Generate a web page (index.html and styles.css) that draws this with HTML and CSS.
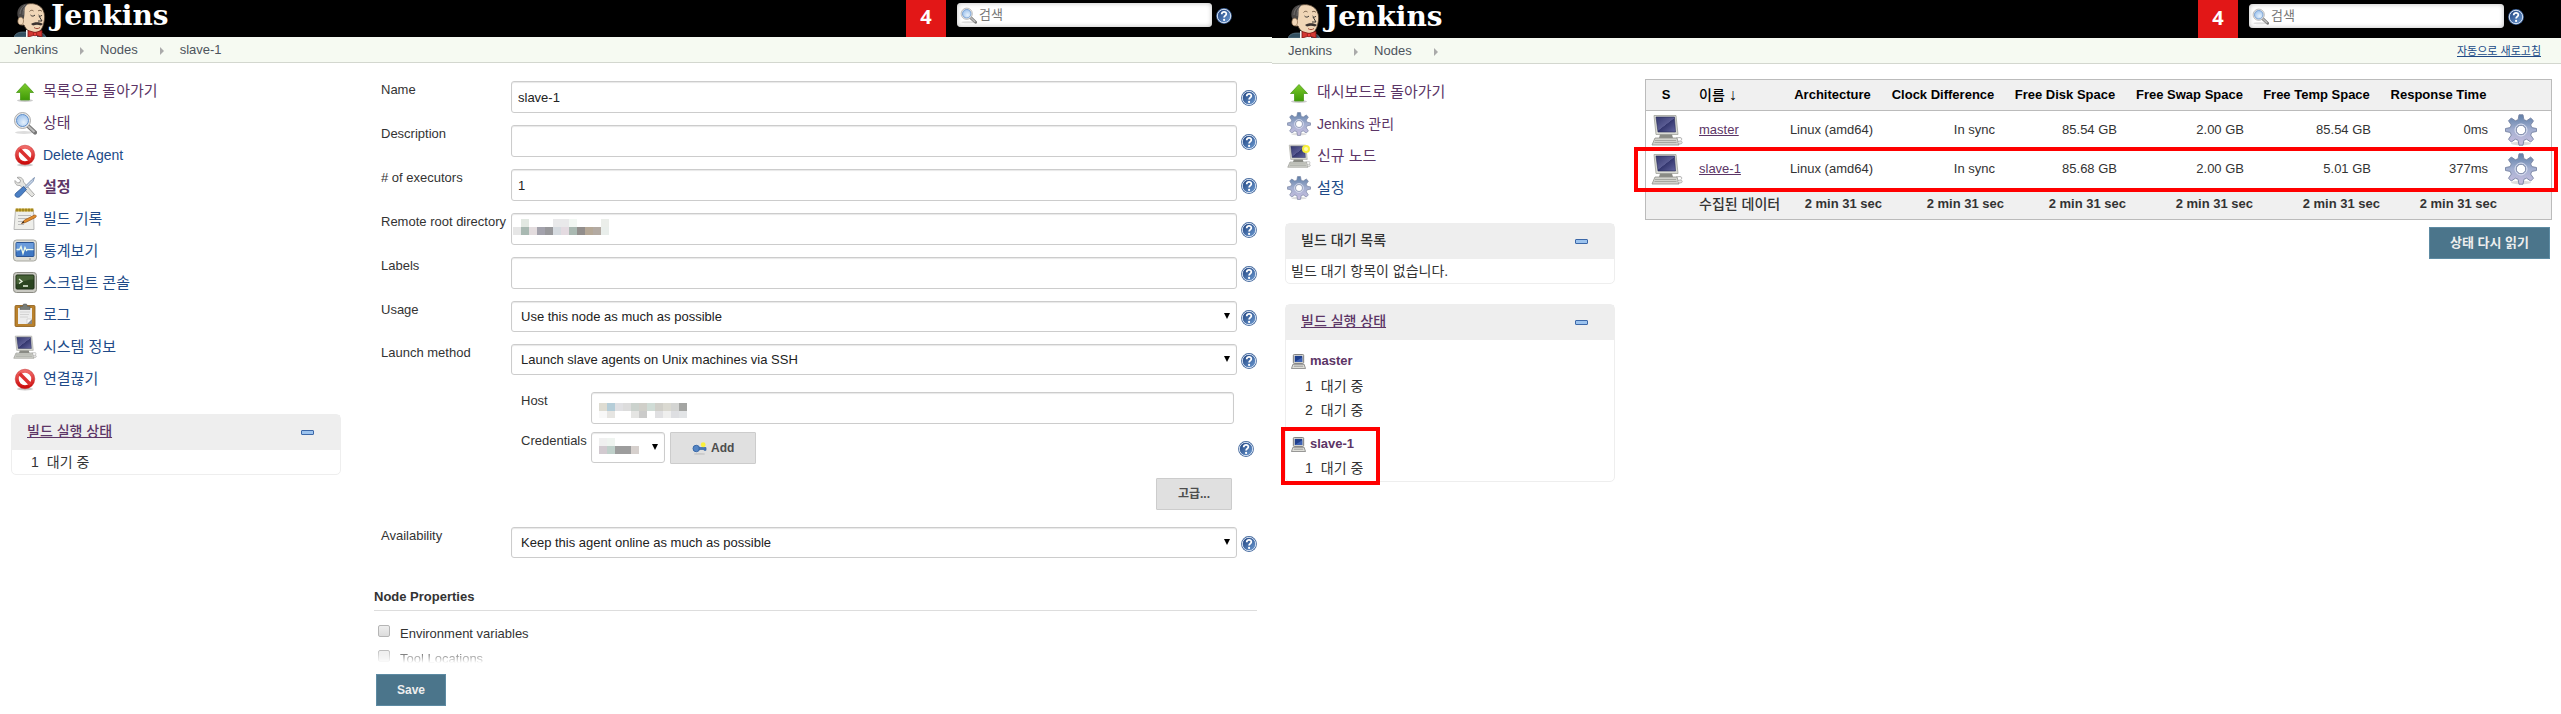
FILE: index.html
```html
<!DOCTYPE html>
<html lang="ko">
<head>
<meta charset="utf-8">
<title>Jenkins</title>
<link rel="stylesheet" href="styles.css">
</head>
<body>
<svg class="defs" aria-hidden="true">
  <defs>
    <linearGradient id="gGreen" x1="0" y1="0" x2="0" y2="1"><stop offset="0" stop-color="#7ccb2c"/><stop offset="1" stop-color="#3f9a06"/></linearGradient>
    <linearGradient id="gRed" x1="0" y1="0" x2="0" y2="1"><stop offset="0" stop-color="#f06a68"/><stop offset="1" stop-color="#cc0d0d"/></linearGradient>
    <linearGradient id="gGear" x1="0" y1="0" x2="0" y2="1"><stop offset="0" stop-color="#5f7fa8"/><stop offset=".5" stop-color="#a3afd0"/><stop offset="1" stop-color="#c9bfe0"/></linearGradient>
    <linearGradient id="gScreen" x1="0" y1="0" x2="1" y2="1"><stop offset="0" stop-color="#34386f"/><stop offset=".5" stop-color="#5a5c93"/><stop offset=".52" stop-color="#34376f"/><stop offset="1" stop-color="#63659e"/></linearGradient>
    <linearGradient id="gHelp" x1="0" y1="0" x2="1" y2="1"><stop offset="0" stop-color="#1c3f7c"/><stop offset="1" stop-color="#6f9dd4"/></linearGradient>
    <radialGradient id="gLens" cx=".6" cy=".65" r=".6"><stop offset="0" stop-color="#e6f1fc"/><stop offset="1" stop-color="#a3c6ee"/></radialGradient>
  </defs>
  <symbol id="i-up" viewBox="0 0 24 24">
    <ellipse cx="12" cy="21.500" rx="8" ry="1.500" fill="#ccc"/>
    <path d="M12 4.500l8.500 9h-4v7.500h-9v-7.500h-4z" fill="url(#gGreen)" stroke="#4c9a1c" stroke-width=".8" stroke-linejoin="round"/>
  </symbol>
  <symbol id="i-search" viewBox="0 0 24 24">
    <ellipse cx="11" cy="21.500" rx="9" ry="1.500" fill="#ddd"/>
    <path d="M15 15l7 6.500" stroke="#777" stroke-width="4.200" stroke-linecap="round"/>
    <path d="M15 15l6.500 6" stroke="#bbb" stroke-width="2"/>
    <circle cx="9.500" cy="9.500" r="8" fill="#e8e8e8" stroke="#999" stroke-width=".8"/>
    <circle cx="9.500" cy="9.500" r="6" fill="url(#gLens)" stroke="#5f8fca" stroke-width="1"/>
  </symbol>
  <symbol id="i-stop" viewBox="0 0 24 24">
    <ellipse cx="12" cy="22" rx="8" ry="1.500" fill="#ccc"/>
    <circle cx="12" cy="12" r="8" fill="#fff" stroke="url(#gRed)" stroke-width="3.500"/>
    <path d="M6.500 6.500l11 11" stroke="#dc3030" stroke-width="3.500"/>
    <circle cx="12" cy="12" r="9.800" fill="none" stroke="#c32222" stroke-width=".5"/>
  </symbol>
  <symbol id="i-tools" viewBox="0 0 24 24">
    <path d="M4 2.500c3-1 6.500.5 6.500 4.500l11 12.500-2.500 2.500-12-11.500c-3.500.5-5.500-2-5-5l2.500 2.500 2.500-.5.500-2.500z" fill="#e4e4e0" stroke="#999" stroke-width=".8"/>
    <path d="M21.500 2.500l-1.500 4-6.500 6.500-1.500-1.500 6.500-6.500 3-2.500z" fill="#c6d4e6" stroke="#6f87a8" stroke-width=".8"/>
    <path d="M10.500 11.500l3 3-6.500 7c-2 2-6.500 0-4.500-3z" fill="#4a7fc4" stroke="#2c5592" stroke-width=".8"/>
  </symbol>
  <symbol id="i-note" viewBox="0 0 24 24">
    <path d="M2.500 3h18l.5 19.500h-20z" fill="#eeeeea" stroke="#aaa" stroke-width=".8"/>
    <path d="M2.500 1.500h18v3h-18z" fill="#c8a72c"/>
    <path d="M4 1.500v3M7 1.500v3M10 1.500v3M13 1.500v3M16 1.500v3M19 1.500v3" stroke="#7d671a"/>
    <path d="M5 8.500h13M5 11.500h9M5 14.500h5M5 17.500h6" stroke="#bbb"/>
    <path d="M8.500 16.500l3-3.500 10-5c1.500-.5 2.500 1.500 1 2.500l-10 5z" fill="#e08a2a" stroke="#98561a" stroke-width=".7"/>
    <path d="M8.500 16.500l2-2.500.8 1.500z" fill="#222"/>
  </symbol>
  <symbol id="i-monitor" viewBox="0 0 24 24">
    <rect x=".5" y="1" width="23" height="21" rx="3" fill="#deded8" stroke="#a8a8a0"/>
    <rect x="3" y="3.500" width="18" height="14" rx="1" fill="#3f78c4" stroke="#2c5592"/>
    <path d="M3.500 4h17v5c-6 0-12 1-17 4z" fill="#6a9bdb"/>
    <path d="M3.500 10.500h3l1.500-3 2 7 2-6 1.500 3 1-1h6" fill="none" stroke="#eefaea" stroke-width="1.300"/>
    <circle cx="17" cy="20" r=".8" fill="#888"/>
  </symbol>
  <symbol id="i-terminal" viewBox="0 0 24 24">
    <rect x=".5" y="1.500" width="23" height="20" rx="3" fill="#c9c9c2" stroke="#8c8c84"/>
    <rect x="3" y="4" width="18" height="14" rx="1" fill="#2a4420" stroke="#1c2c16"/>
    <path d="M3.500 4.500h17v4c-6 0-12 2-17 5z" fill="#466136"/>
    <path d="M6 8l3 2.500-3 2M10 15h5" fill="none" stroke="#e8f2e0" stroke-width="1.300"/>
  </symbol>
  <symbol id="i-clip" viewBox="0 0 24 24">
    <rect x="2" y="2.500" width="20" height="21" rx="1" fill="#b9812c" stroke="#8a5c18" stroke-width=".8"/>
    <path d="M5 5h14v16h-14z" fill="#ededed"/>
    <path d="M14 21l5-5v5z" fill="#888"/><path d="M14 21v-5h5z" fill="#fafafa" stroke="#bbb" stroke-width=".5"/>
    <path d="M7 9h10M7 11.500h9M7 14h8" stroke="#ccc" stroke-width=".8"/>
    <path d="M7 6.500v-3h2.500l1-2.500h3l1 2.500h2.500v3z" fill="#777d78" stroke="#555" stroke-width=".5"/>
  </symbol>
  <symbol id="i-pc" viewBox="0 0 32 32">
    <path d="M3 1.500h22l2 19h-22z" fill="#d9dad4" stroke="#a2a39c" stroke-width=".8"/>
    <path d="M5 3h18.500l1 15h-17.500z" fill="url(#gScreen)" stroke="#262a56" stroke-width=".6"/>
    <path d="M9 20.500h12l1 3.500h-14z" fill="#8a8b85"/>
    <path d="M4 24h22l2 7h-27z" fill="#d2d3cd" stroke="#8f908a" stroke-width=".8"/>
    <path d="M4 26.500h21M3.500 28.500h22" stroke="#9b9c96" stroke-width=".8"/>
    <path d="M25 24c5-1 7 0 5 2.500" fill="none" stroke="#aaa"/><ellipse cx="29" cy="28.500" rx="2.200" ry="1.500" fill="#e5e5e2" stroke="#999" stroke-width=".6"/>
  </symbol>
  <symbol id="i-pcnew" viewBox="0 0 24 24">
    <use href="#i-pc" width="24" height="24"/>
    <circle cx="19" cy="5" r="4" fill="#f7ee3a"/><circle cx="19" cy="5" r="2" fill="#fdfbb0"/>
  </symbol>
  <symbol id="i-pcs" viewBox="0 0 16 16">
    <rect x="2.500" y=".5" width="11" height="9.500" rx="1" fill="#deded8" stroke="#777"/>
    <rect x="4" y="2" width="8" height="6.500" fill="#1f3f8c"/><path d="M4 8.500l8-5v5z" fill="#3e62b4"/>
    <path d="M2 11h12l1.500 4.500h-15z" fill="#deded8" stroke="#777" stroke-width=".8"/><path d="M3 13h10" stroke="#999"/>
  </symbol>
  <symbol id="i-gear" viewBox="0 0 32 32">
    <ellipse cx="16" cy="29.500" rx="10" ry="1.800" fill="#ddd"/>
    <path fill-rule="evenodd" d="M14 .8h4l.9 4.900 2.700 1.100 4.100-2.800 2.800 2.800-2.800 4.100 1.100 2.700 4.700.9v3l-4.700.9-1.100 2.700 2.800 4.100-2.800 2.800-4.100-2.800-2.700 1.100-.9 4.900h-4l-.9-4.900-2.700-1.100-4.100 2.800-2.800-2.800 2.800-4.100-1.100-2.700-4.700-.9v-3l4.700-.9 1.100-2.700-2.800-4.100 2.800-2.800 4.100 2.800 2.700-1.100zM16 11.300a4.700 4.700 0 1 0 0 9.400 4.700 4.700 0 1 0 0-9.400z" fill="url(#gGear)" stroke="#7783a3" stroke-width=".9" stroke-linejoin="round"/>
    <circle cx="16" cy="16" r="6" fill="none" stroke="#dde2f2" stroke-width="1"/>
  </symbol>
  <symbol id="i-help" viewBox="0 0 16 16">
    <circle cx="8" cy="8" r="7.900" fill="#3c6299"/>
    <circle cx="8" cy="8" r="6.700" fill="url(#gHelp)" stroke="#e8effa" stroke-width=".9"/>
    <path d="M5.700 6.200c0-3.200 4.800-3 4.600-.2-.1 1.600-2.200 1.700-2.200 3.500" fill="none" stroke="#fff" stroke-width="1.800"/>
    <circle cx="8.100" cy="11.900" r="1.100" fill="#fff"/>
  </symbol>
  <symbol id="i-minus" viewBox="0 0 13 5"><rect x=".5" y=".5" width="12" height="4" rx=".5" fill="#9cc3ee" stroke="#3c68a8"/></symbol>
  <symbol id="i-key" viewBox="0 0 16 14">
    <ellipse cx="8" cy="12.800" rx="6" ry="1" fill="#c8c8c8"/>
    <circle cx="4.500" cy="7" r="3.500" fill="#5585c4" stroke="#3465a4"/>
    <path d="M7.500 6h7.500v3h-2v-1h-5.500z" fill="#4a7ab8" stroke="#3465a4" stroke-width=".8"/>
    <circle cx="12" cy="3" r="2.600" fill="#f9f03a"/>
  </symbol>
  <symbol id="i-butler" viewBox="0 0 34 35">
    <path d="M0 35c1-3 4-5 9-5h16c4 1 6 3 7 5z" fill="#335061" stroke="#6d8796" stroke-width=".6"/>
    <path d="M12 28h11v7h-11z" fill="#f4f4f4"/>
    <path d="M6 8c3-8 18-9 23 0 2 4 2 8 1 12-1 6-4 11-9 11-5 0-9-3-11-8-5 1-7-4-4-8z" fill="#f0d6b7" stroke="#4b3a2a" stroke-width=".8"/>
    <path d="M14 1.500c-7 0-11.500 5-10.500 12l1 3c2-2 4-1 5 1 1-3 1-6 1-9 0-3 1-5 3.500-7z" fill="#4a4746"/>
    <path d="M11 3c-3 2-5 5-5 9M13 3c-3 2-4 5-4 10" fill="none" stroke="#8d8a88" stroke-width=".6"/>
    <path d="M4.500 16.500c2-2.500 5-1 5 2.500 0 3-2 4.500-4 3.500-2-1-2-4-1-6z" fill="#f0d6b7" stroke="#8a6b4c" stroke-width=".7"/>
    <path d="M15.500 9.500c1-1.500 3-1.500 4-.5M24 9c1-1 3-1 4 .5" fill="none" stroke="#5c4530" stroke-width=".8"/>
    <path d="M16.500 13c1.500 1.500 3 1.500 4.500 0M24.500 13c1.500 1.500 2.500 1.500 3.500 0M25 14l3 5h-4" fill="none" stroke="#222" stroke-width=".9"/>
    <path d="M17 22c3-2.500 9-2.500 12 0l-2 1.500c-3-1-5-1-8 0z" fill="#3a3230"/>
    <path d="M20 25.500c2 1.500 4 1.500 6 0" fill="none" stroke="#a04a3a"/>
    <path d="M14 28.500l7 2 7-2v6.500l-7-2-7 2z" fill="#d33833" stroke="#7d1512" stroke-width=".8"/>
    <circle cx="21" cy="32" r="1.800" fill="#ef3d3a" stroke="#7d1512" stroke-width=".6"/>
  </symbol>
  <symbol id="i-tri" viewBox="0 0 4 8"><path d="M0 0l4 4-4 4z" fill="#aaa"/></symbol>
</svg>

<div class="screens">
  <section class="screen screen-config">
    <header class="top">
      <a class="brand" href="#"><svg class="butler"><use href="#i-butler"/></svg><span>Jenkins</span></a>
      <a class="alerts" href="#">4</a>
      <label class="search"><svg><use href="#i-search"/></svg><input type="text" placeholder="검색" aria-label="검색"></label>
      <a class="help" href="#" aria-label="Help"><svg><use href="#i-help"/></svg></a>
    </header>
    <nav class="crumbs">
      <a href="#">Jenkins</a><svg><use href="#i-tri"/></svg><a href="#">Nodes</a><svg><use href="#i-tri"/></svg><a href="#">slave-1</a>
    </nav>
    <div class="body">
      <aside class="side">
        <ul class="tasks">
          <li><a class="seen" href="#"><svg><use href="#i-up"/></svg>목록으로 돌아가기</a></li>
          <li><a class="seen" href="#"><svg><use href="#i-search"/></svg>상태</a></li>
          <li><a lang="en" href="#"><svg><use href="#i-stop"/></svg>Delete Agent</a></li>
          <li><a class="seen current" href="#"><svg><use href="#i-tools"/></svg>설정</a></li>
          <li><a href="#"><svg><use href="#i-note"/></svg>빌드 기록</a></li>
          <li><a href="#"><svg><use href="#i-monitor"/></svg>통계보기</a></li>
          <li><a href="#"><svg><use href="#i-terminal"/></svg>스크립트 콘솔</a></li>
          <li><a href="#"><svg><use href="#i-clip"/></svg>로그</a></li>
          <li><a href="#"><svg><use href="#i-pc"/></svg>시스템 정보</a></li>
          <li><a href="#"><svg><use href="#i-stop"/></svg>연결끊기</a></li>
        </ul>
        <section class="pane">
          <h2><a href="#">빌드 실행 상태</a><button type="button" aria-label="접기"><svg><use href="#i-minus"/></svg></button></h2>
          <ol class="executors">
            <li><span>1</span>대기 중</li>
          </ol>
        </section>
      </aside>

      <form class="config">
        <div class="row"><label for="name">Name</label><input id="name" type="text" value="slave-1"><a class="help" href="#" aria-label="Help"><svg><use href="#i-help"/></svg></a></div>
        <div class="row"><label for="desc">Description</label><input id="desc" type="text"><a class="help" href="#" aria-label="Help"><svg><use href="#i-help"/></svg></a></div>
        <div class="row"><label for="exec"># of executors</label><input id="exec" type="text" value="1"><a class="help" href="#" aria-label="Help"><svg><use href="#i-help"/></svg></a></div>
        <div class="row"><label for="root">Remote root directory</label>
          <div class="field"><input id="root" type="text">
            <svg class="mosaic mosaic-root" viewBox="0 0 96 16" aria-hidden="true">
              <path d="M8 0h8v8h-8z" fill="#e2e8e2"/><path d="M40 0h16v8h-16z" fill="#e9e9ea"/><path d="M56 0h8v8h-8z" fill="#f2f7f3"/><path d="M88 0h8v8h-8z" fill="#ebeeea"/>
              <path d="M0 8h8v8h-8z" fill="#e6e6e6"/><path d="M8 8h8v8h-8z" fill="#a9b9b2"/><path d="M16 8h8v8h-8z" fill="#e3dcde"/><path d="M24 8h8v8h-8z" fill="#a3a2ac"/><path d="M32 8h8v8h-8z" fill="#98989b"/><path d="M40 8h8v8h-8z" fill="#d6dbe0"/><path d="M48 8h8v8h-8z" fill="#e4dbe1"/><path d="M56 8h8v8h-8z" fill="#aab9b2"/><path d="M64 8h8v8h-8z" fill="#928e8c"/><path d="M72 8h8v8h-8z" fill="#b5a897"/><path d="M80 8h8v8h-8z" fill="#b3aaa2"/><path d="M88 8h8v8h-8z" fill="#e9eeeb"/>
            </svg>
          </div>
          <a class="help" href="#" aria-label="Help"><svg><use href="#i-help"/></svg></a></div>
        <div class="row"><label for="labels">Labels</label><input id="labels" type="text"><a class="help" href="#" aria-label="Help"><svg><use href="#i-help"/></svg></a></div>
        <div class="row"><label for="usage">Usage</label><div class="field pick"><select id="usage"><option>Use this node as much as possible</option></select></div><a class="help" href="#" aria-label="Help"><svg><use href="#i-help"/></svg></a></div>
        <div class="row launch"><label for="launch">Launch method</label><div class="field pick"><select id="launch"><option>Launch slave agents on Unix machines via SSH</option></select></div><a class="help" href="#" aria-label="Help"><svg><use href="#i-help"/></svg></a></div>

        <div class="nested">
          <div class="subrow"><label for="host">Host</label>
            <div class="field"><input id="host" type="text">
              <svg class="mosaic mosaic-host" viewBox="0 0 88 15" aria-hidden="true">
                <path d="M0 0h8v8h-8z" fill="#dedcd2"/><path d="M8 0h8v8h-8z" fill="#b5cdd8"/><path d="M16 0h8v8h-8z" fill="#e0e0e3"/><path d="M24 0h8v8h-8z" fill="#dcdcdc"/><path d="M32 0h8v8h-8z" fill="#cbd2cd"/><path d="M40 0h8v8h-8z" fill="#d0cfc9"/><path d="M48 0h8v8h-8z" fill="#d0dcd6"/><path d="M56 0h8v8h-8z" fill="#d0cfc9"/><path d="M64 0h8v8h-8z" fill="#dad9d1"/><path d="M72 0h8v8h-8z" fill="#d3d4d2"/><path d="M80 0h8v8h-8z" fill="#a4a5a3"/>
                <path d="M0 8h8v7h-8z" fill="#f8f8f8"/><path d="M8 8h8v7h-8z" fill="#e6e5e2"/><path d="M32 8h8v7h-8z" fill="#e5e5e3"/><path d="M40 8h8v7h-8z" fill="#cbcbca"/><path d="M56 8h8v7h-8z" fill="#e0e0e2"/><path d="M64 8h8v7h-8z" fill="#efefee"/><path d="M72 8h8v7h-8z" fill="#dedfe2"/><path d="M80 8h8v7h-8z" fill="#e2e4e6"/>
              </svg>
            </div></div>
          <div class="subrow"><label for="cred">Credentials</label>
            <div class="creds">
              <div class="field pick"><select id="cred"><option></option></select>
                <svg class="mosaic mosaic-cred" viewBox="0 0 40 16" aria-hidden="true">
                  <path d="M0 0h8v8h-8z" fill="#f0f0f0"/><path d="M8 0h8v8h-8z" fill="#eff4f0"/><path d="M0 8h8v8h-8z" fill="#d2cad0"/><path d="M8 8h8v8h-8z" fill="#bfd0ca"/><path d="M16 8h16v8h-16z" fill="#9d9d9d"/><path d="M32 8h8v8h-8z" fill="#d6d0cd"/>
                </svg>
              </div>
              <button class="plain add" type="button"><svg><use href="#i-key"/></svg>Add</button>
            </div>
            <a class="help" href="#" aria-label="Help"><svg><use href="#i-help"/></svg></a></div>
          <button class="plain advanced" type="button">고급...</button>
        </div>

        <div class="row"><label for="avail">Availability</label><div class="field pick"><select id="avail"><option>Keep this agent online as much as possible</option></select></div><a class="help" href="#" aria-label="Help"><svg><use href="#i-help"/></svg></a></div>

        <h3>Node Properties</h3>
        <label class="check"><input type="checkbox">Environment variables</label>
        <label class="check fading"><input type="checkbox">Tool Locations</label>
        <button class="primary save" type="submit">Save</button>
      </form>
    </div>
  </section>

  <section class="screen screen-nodes">
    <header class="top">
      <a class="brand" href="#"><svg class="butler"><use href="#i-butler"/></svg><span>Jenkins</span></a>
      <a class="alerts" href="#">4</a>
      <label class="search"><svg><use href="#i-search"/></svg><input type="text" placeholder="검색" aria-label="검색"></label>
      <a class="help" href="#" aria-label="Help"><svg><use href="#i-help"/></svg></a>
    </header>
    <nav class="crumbs">
      <a href="#">Jenkins</a><svg><use href="#i-tri"/></svg><a href="#">Nodes</a><svg><use href="#i-tri"/></svg>
      <a class="refresh" href="#">자동으로 새로고침</a>
    </nav>
    <div class="body">
      <aside class="side">
        <ul class="tasks">
          <li><a class="seen" href="#"><svg><use href="#i-up"/></svg>대시보드로 돌아가기</a></li>
          <li><a class="seen" lang="en" href="#"><svg><use href="#i-gear"/></svg>Jenkins 관리</a></li>
          <li><a class="seen" href="#"><svg><use href="#i-pcnew"/></svg>신규 노드</a></li>
          <li><a href="#"><svg><use href="#i-gear"/></svg>설정</a></li>
        </ul>
        <section class="pane">
          <h2><span>빌드 대기 목록</span><button type="button" aria-label="접기"><svg><use href="#i-minus"/></svg></button></h2>
          <p>빌드 대기 항목이 없습니다.</p>
        </section>
        <section class="pane">
          <h2><a href="#">빌드 실행 상태</a><button type="button" aria-label="접기"><svg><use href="#i-minus"/></svg></button></h2>
          <div class="node">
            <a href="#"><svg><use href="#i-pcs"/></svg>master</a>
            <ol class="executors"><li><span>1</span>대기 중</li><li><span>2</span>대기 중</li></ol>
          </div>
          <div class="node marked">
            <a href="#"><svg><use href="#i-pcs"/></svg>slave-1</a>
            <ol class="executors"><li><span>1</span>대기 중</li></ol>
          </div>
        </section>
      </aside>

      <main class="nodes">
        <div class="tablewrap">
          <table>
            <colgroup><col class="c-s"><col class="c-name"><col class="c-arch"><col class="c-mid"><col class="c-mid"><col class="c-wide"><col class="c-wide"><col class="c-resp"><col class="c-act"></colgroup>
            <thead><tr><th>S</th><th class="name">이름 <span>↓</span></th><th>Architecture</th><th>Clock Difference</th><th>Free Disk Space</th><th>Free Swap Space</th><th>Free Temp Space</th><th>Response Time</th><th></th></tr></thead>
            <tbody>
              <tr><td class="icon"><svg><use href="#i-pc"/></svg></td><td class="name"><a href="#">master</a></td><td>Linux (amd64)</td><td>In sync</td><td>85.54 GB</td><td>2.00 GB</td><td>85.54 GB</td><td>0ms</td><td class="icon act"><a href="#" aria-label="설정"><svg><use href="#i-gear"/></svg></a></td></tr>
              <tr><td class="icon"><svg><use href="#i-pc"/></svg></td><td class="name"><a href="#">slave-1</a></td><td>Linux (amd64)</td><td>In sync</td><td>85.68 GB</td><td>2.00 GB</td><td>5.01 GB</td><td>377ms</td><td class="icon act"><a href="#" aria-label="설정"><svg><use href="#i-gear"/></svg></a></td></tr>
            </tbody>
            <tfoot><tr><th></th><th class="name">수집된 데이터</th><th>2 min 31 sec</th><th>2 min 31 sec</th><th>2 min 31 sec</th><th>2 min 31 sec</th><th>2 min 31 sec</th><th>2 min 31 sec</th><th></th></tr></tfoot>
          </table>
          <div class="rowmark"></div>
        </div>
        <button class="primary reload" type="button">상태 다시 읽기</button>
      </main>
    </div>
  </section>
</div>
</body>
</html>
```

FILE: styles.css
```css
*, ::after { box-sizing: border-box; }
body {
  margin: 0;
  background: #fff;
  color: #333;
  font: 13px/16px "Liberation Sans", "Noto Sans CJK KR", sans-serif;
}
ul, ol, p, h2, h3 { margin: 0; padding: 0; list-style: none; }
svg { display: block; flex: none; }
.defs { position: absolute; width: 0; height: 0; }
button, input, select { font: inherit; }
button { cursor: pointer; }

.screens { display: grid; grid-template-columns: 1272fr 1289fr; min-height: 100vh; }
.screen { display: flex; flex-direction: column; min-width: 0; }

/* header */
.top { display: flex; align-items: flex-start; height: 37px; padding: 0 40px 0 14px; background: #000; overflow: hidden; }
.screen-nodes .top { height: 38px; padding: 1px 37px 0 16px; }
.brand { display: flex; margin-right: auto; gap: 3px; color: #fff; text-decoration: none; font: bold 28px/32px "DejaVu Serif", serif; }
.butler { width: 34px; height: 35px; margin-top: 2px; }
.alerts { width: 40px; height: 40px; margin-right: 11px; background: #e21717; color: #fff; text-align: center; text-decoration: none; font: bold 20px/34px "Open Sans", sans-serif; }
.screen-nodes .alerts { margin-top: -1px; line-height: 36px; }
.search { display: flex; align-items: center; width: 255px; height: 24px; margin: 3px 4px 0 0; padding-left: 3px; border-radius: 4px; background: #fff; box-shadow: inset 0 0 5px #bbb; }
.search svg { width: 17px; height: 17px; }
.search input { flex: 1; min-width: 0; padding: 0 0 0 2px; border: 0; background: none; outline: none; }
.search input::placeholder { color: #777; }
.help svg { width: 16px; height: 16px; }
.top .help { margin-top: 8px; }

/* breadcrumbs */
.crumbs { display: flex; align-items: center; height: 26px; padding: 0 20px 0 14px; background: #f6faf2; border-bottom: 1px solid #d3d7cf; }
.screen-nodes .crumbs { padding-left: 16px; }
.crumbs a { color: #4d545d; text-decoration: none; }
.crumbs svg { width: 4px; height: 8px; margin: 2px 16px 0 22px; }
.crumbs .refresh { margin-left: auto; color: #204a87; font-size: 11px; text-decoration: underline; }

.body { display: flex; flex: 1; }
.side { flex: none; width: 330px; margin: 12px 33px 0 11px; }
.screen-nodes .side { margin: 12px 30px 0 13px; }

/* side tasks */
.tasks { margin-bottom: 19px; }
.tasks a { display: flex; align-items: center; gap: 6px; height: 32px; padding-left: 2px; color: #204a87; font-size: 15px; text-decoration: none; }
.tasks a:lang(en) { font-size: 14px; }
.tasks a.seen { color: #5c3566; }
.tasks a.current { font-weight: bold; }
.tasks svg { width: 24px; height: 24px; }

/* side panes */
.pane { margin-bottom: 20px; border: 1px solid #eee; border-radius: 5px; font-size: 14px; }
.pane h2 { display: flex; align-items: center; justify-content: space-between; height: 35px; padding: 0 26px 0 15px; background: #eee; font-size: 14px; font-weight: 500; }
.pane h2 a, .pane h2 span { padding-bottom: 3px; }
.pane h2 a { color: #5c3566; }
.pane h2 button { padding: 0; border: 0; background: none; }
.pane h2 svg { width: 13px; height: 5px; }
.pane p { padding: 0 5px; line-height: 24px; }
.executors li { display: flex; gap: 8px; padding-left: 19px; line-height: 24px; }
.node { position: relative; padding-top: 12px; }
.node + .node { padding: 13px 0 1px; }
.node > a { display: flex; align-items: center; gap: 4px; height: 18px; margin-bottom: 4px; padding-left: 5px; color: #5c3566; font-size: 13px; font-weight: bold; text-decoration: none; }
.node + .node > a { margin-bottom: 3px; }
.node > a svg { width: 15px; height: 15px; }
.marked::after { content: ""; position: absolute; left: -5px; top: 5px; bottom: -4px; width: 99px; border: 4px solid #f00; }

/* configuration form */
.config { flex: 1; min-width: 0; padding: 18px 15px 8px 0; }
.config label[for] { padding-top: 1px; }
.row { display: grid; grid-template-columns: 130px 1fr 16px; margin-bottom: 12px; padding-left: 7px; }
.row > .help { margin: 9px 0 0; }
.row > input, .row > .field { margin-right: 4px; }
.config input[type="text"], .config select {
  display: block; width: 100%; height: 32px; padding: 0 6px;
  border: 1px solid #ccc; border-radius: 3px; background: #fff; color: #222;
  box-shadow: inset 0 1px 1px #e8e8e8; outline: none;
}
.config .row > input[type="text"] { width: auto; }
.config select { height: 31px; padding: 0 20px 0 9px; appearance: none; }
.field { position: relative; min-width: 0; }
.pick::after { content: ""; position: absolute; right: 7px; top: 12px; width: 6px; height: 6px; background: #000; clip-path: polygon(0 0, 100% 0, 50% 100%); }
.mosaic { position: absolute; pointer-events: none; }
.mosaic-root { left: 2px; top: 6px; width: 96px; height: 16px; }
.mosaic-host { left: 8px; top: 11px; width: 88px; height: 15px; }
.mosaic-cred { left: 8px; top: 6px; width: 40px; height: 16px; }
.launch { margin-bottom: 17px; }
.nested { display: flex; flex-direction: column; margin-bottom: 17px; padding: 0 3px 0 147px; }
.subrow { display: grid; grid-template-columns: 70px 1fr 16px; }
.subrow .field { margin-right: 4px; }
.subrow + .subrow { margin-top: 8px; }
.subrow .help { margin-top: 9px; }
.creds { display: flex; gap: 1px; }
.creds .field { width: 74px; }
.plain { height: 32px; border: 1px solid #ccc; border-radius: 1px; background: #e0e0e0; color: #4d4d4d; font-size: 12px; font-weight: bold; }
.add { display: flex; align-items: center; gap: 4px; padding: 0 21px; }
.add svg { width: 15px; height: 13px; }
.advanced { align-self: flex-end; width: 76px; margin: 14px 22px 0 0; }
.config h3 { margin: 19px 0 13px; padding: 12px 0 5px; border-bottom: 1px solid #ddd; font-size: 13px; line-height: 16px; }
.check { display: flex; align-items: flex-start; gap: 10px; padding-left: 4px; line-height: 20px; }
.check input { width: 12px; height: 12px; margin: 1px 0 0; appearance: none; border: 1px solid #b5b5b5; border-radius: 2px; background: linear-gradient(#eee, #dcdcdc); }
.fading { margin: 5px 0; mask-image: linear-gradient(#000, transparent 14px); }
.primary { height: 32px; border: 1px solid #5d8ba3; background: #4b758b; color: #eee; font-weight: bold; }
.save { display: block; width: 70px; margin-left: 2px; font-size: 12px; }

/* node table */
.nodes { display: flex; flex: 1; flex-direction: column; min-width: 0; padding: 15px 9px 0 0; }
.tablewrap { position: relative; }
table { width: 100%; table-layout: fixed; border: 1px solid #bbb; border-spacing: 0; }
.c-s { width: 40px; } .c-name { width: 97px; } .c-arch { width: 99px; } .c-mid { width: 122px; }
.c-wide { width: 127px; } .c-resp { width: 117px; } .c-act { width: 54px; }
th, td { padding: 0; white-space: nowrap; }
thead th { height: 31px; border-bottom: 1px solid #bbb; background: #f0f0f0; color: #000; text-align: center; }
td { height: 39px; padding: 0 9px 2px 0; text-align: right; }
tfoot th { height: 30px; background: #f0f0f0; text-align: right; }
.nodes .name { padding-left: 13px; text-align: left; }
th.name { font-size: 14px; font-weight: 500; }
th.name span { font-size: 16px; font-weight: normal; }
.name a { color: #5c3566; }
td.icon { padding: 0 0 2px 5px; }
td.act { padding-left: 8px; }
.icon svg { width: 32px; height: 32px; }
.rowmark { position: absolute; left: -11px; right: -6px; top: 68px; height: 45px; border: 4px solid #f00; }
.reload { align-self: flex-end; width: 121px; margin: 7px 2px 0 0; font-size: 13px; }
```
